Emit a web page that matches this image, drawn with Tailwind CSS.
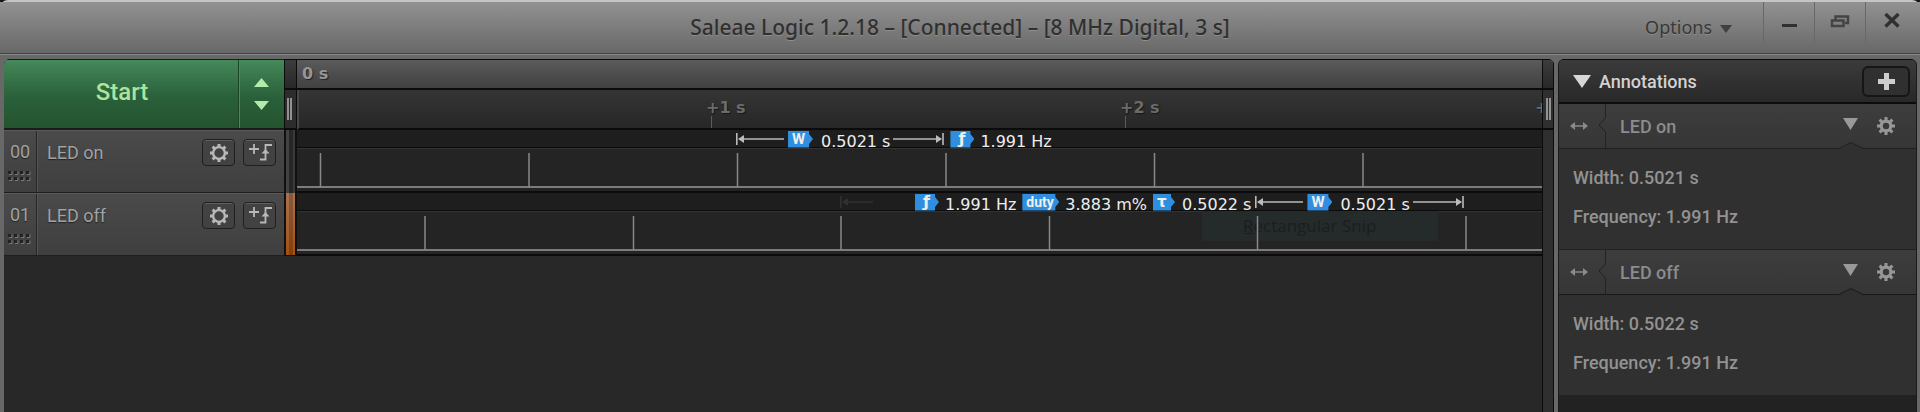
<!DOCTYPE html>
<html lang="en">
<head>
<meta charset="utf-8">
<title>Saleae Logic 1.2.18</title>
<script src="https://cdn.jsdelivr.net/npm/@tailwindcss/browser@4"></script>
</head>
<body class="bg-[#14161c]">
<svg class="hidden">
  <symbol id="gear" viewBox="0 0 20 20">
    <circle cx="10" cy="10" r="5.9" fill="none" stroke="currentColor" stroke-width="2.4"/>
    <g stroke="currentColor" stroke-width="3">
      <path d="M10 1v3M10 16v3M1 10h3M16 10h3M3.6 3.6l2.2 2.2M14.2 14.2l2.2 2.2M3.6 16.4l2.2-2.2M14.2 5.8l2.2-2.2"/>
    </g>
  </symbol>
  <symbol id="cog" viewBox="0 0 20 20">
    <circle cx="10" cy="10" r="4.8" fill="none" stroke="currentColor" stroke-width="3.2"/>
    <g stroke="currentColor" stroke-width="3">
      <path d="M10 1v4M10 15v4M1 10h4M15 10h4M3.6 3.6l3 3M13.4 13.4l3 3M3.6 16.4l3-3M13.4 6.6l3-3"/>
    </g>
  </symbol>
  <symbol id="edge" viewBox="0 0 24 20">
    <path d="M1 6h10M6 1v10M12 16.5h5.5V2H24" fill="none" stroke="currentColor" stroke-width="1.8"/>
    <path d="M13.500 10.500h8l-4-4.500z" fill="currentColor"/>
  </symbol>
  <symbol id="grip" viewBox="0 0 24 12">
    <g fill="#222"><path d="M0 1h3v3H0zM6 1h3v3H6zM12 1h3v3h-3zM18 1h3v3h-3zM0 7h3v3H0zM6 7h3v3H6zM12 7h3v3h-3zM18 7h3v3h-3z"/></g>
    <path d="M1 4.500h3v-3M7 4.500h3v-3M13 4.500h3v-3M19 4.500h3v-3M1 10.500h3v-3M7 10.500h3v-3M13 10.500h3v-3M19 10.500h3v-3" fill="none" stroke="#777"/>
  </symbol>
  <symbol id="span" viewBox="0 0 18 10">
    <path d="M2 5h14" stroke="currentColor" stroke-width="1.500"/>
    <path d="M0 5l5-4v8zM18 5l-5-4v8z" fill="currentColor"/>
  </symbol>
</svg>

<div class="flex min-h-screen flex-col rounded-t-lg border-t-2 border-[#c4c6c4] bg-[#686868] font-[Roboto,sans-serif]">
  <header class="flex h-[52px] items-start border-b border-[#444] bg-linear-to-b from-[#929292] to-[#686868]">
    <div class="flex-1"></div>
    <h1 class="pt-[11px] font-['Noto_Sans',sans-serif] text-[21px] leading-7 font-medium text-[#303030] [text-shadow:0_1px_0_#8d8d8d]">Saleae Logic 1.2.18 – [Connected] – [8 MHz Digital, 3 s]</h1>
    <div class="flex flex-1 justify-end">
      <button class="mr-[31px] flex items-center gap-2 pt-2.5 font-['Noto_Sans',sans-serif] text-[18px] leading-7 text-[#383838] [text-shadow:0_1px_0_#8d8d8d]">Options
        <svg class="mt-1 h-2 w-3" viewBox="0 0 12 8"><path d="M0 0h12L6 8z" fill="#404040"/></svg>
      </button>
      <button aria-label="Minimize" class="flex h-10 w-[51px] justify-center border-l border-[#686868] pt-[22px]"><span class="h-[3px] w-[15px] bg-[#303030]"></span></button>
      <button aria-label="Restore" class="flex h-10 w-[51px] justify-center border-l border-[#686868] pt-[13px]">
        <svg class="h-3.5 w-5" viewBox="0 0 20 14"><path d="M5.500 5V1.500h12.500v6.500h-3M2 5.500h11.500v5.500H2z" fill="none" stroke="#444" stroke-width="2.500"/></svg>
      </button>
      <button aria-label="Close" class="flex h-10 w-[55px] justify-center border-l border-[#686868] pt-2.5 pr-0.5">
        <svg class="h-4 w-4" viewBox="0 0 16 16"><path d="M1.500 2l13 12.500M14.500 2l-13 12.500" stroke="#303030" stroke-width="3.400"/></svg>
      </button>
    </div>
  </header>

  <main class="flex flex-1 items-stretch border-t border-[#888] pt-1 pr-[3px] pl-1">
    <section class="flex min-w-0 flex-1 flex-col overflow-hidden rounded-t-md bg-[#282828]">
      <div class="flex flex-1">
        <!-- Channels -->
        <div class="w-[280px] shrink-0">
          <div class="flex h-[71px] border-t border-b-2 border-[#1b1b1b] bg-linear-to-b from-[#45895a] via-[#29603a] via-55% to-[#24532f]">
            <button class="flex-1 border-r border-[#1b4527] pb-1 pl-0.5 text-[24px] font-medium text-[#aee39c]">Start</button>
            <button aria-label="Capture settings" class="flex w-[45px] flex-col items-center justify-center gap-3.5 border-l border-[#4c8a5e] pr-0.5">
              <svg class="h-[9px] w-[15px]" viewBox="0 0 15 9"><path d="M0 9h15L7.500 0z" fill="#b4ebac"/></svg>
              <svg class="h-[9px] w-[15px]" viewBox="0 0 15 9"><path d="M0 0h15L7.500 9z" fill="#b4ebac"/></svg>
            </button>
          </div>
          <div class="flex h-[63px] border-t border-b border-t-[#5a5a5a] border-b-[#1e1e1e] bg-linear-to-b from-[#4a4a4a] to-[#3f3f3f] text-[18px] text-[#a2a2a2] [text-shadow:0_1px_1px_#222]">
            <div class="flex w-[33px] flex-col items-center gap-1.5 border-r border-[#262626] pt-[9px]"><span class="leading-6">00</span><svg class="h-3 w-6"><use href="#grip"/></svg></div>
            <div class="flex flex-1 items-start gap-2 border-l border-[#555] pt-2 pr-2 pl-[9px]">
              <span class="flex-1 leading-7">LED on</span>
              <button aria-label="LED on settings" class="flex h-[27px] w-[33px] items-center justify-center rounded border border-[#1f1f1f] bg-[#424242] text-[#b8b8b8] inset-shadow-[0_1px_0_#606060]"><svg class="h-5 w-5"><use href="#gear"/></svg></button>
              <button aria-label="LED on trigger" class="flex h-[27px] w-[33px] items-center justify-center rounded border border-[#1f1f1f] bg-[#424242] text-[#b8b8b8] inset-shadow-[0_1px_0_#606060]"><svg class="h-5 w-6"><use href="#edge"/></svg></button>
            </div>
          </div>
          <div class="flex h-[63px] border-t border-b border-t-[#5a5a5a] border-b-[#1e1e1e] bg-linear-to-b from-[#4a4a4a] to-[#3f3f3f] text-[18px] text-[#a2a2a2] [text-shadow:0_1px_1px_#222]">
            <div class="flex w-[33px] flex-col items-center gap-1.5 border-r border-[#262626] pt-[9px]"><span class="leading-6">01</span><svg class="h-3 w-6"><use href="#grip"/></svg></div>
            <div class="flex flex-1 items-start gap-2 border-l border-[#555] pt-2 pr-2 pl-[9px]">
              <span class="flex-1 leading-7">LED off</span>
              <button aria-label="LED off settings" class="flex h-[27px] w-[33px] items-center justify-center rounded border border-[#1f1f1f] bg-[#424242] text-[#b8b8b8] inset-shadow-[0_1px_0_#606060]"><svg class="h-5 w-5"><use href="#gear"/></svg></button>
              <button aria-label="LED off trigger" class="flex h-[27px] w-[33px] items-center justify-center rounded border border-[#1f1f1f] bg-[#424242] text-[#b8b8b8] inset-shadow-[0_1px_0_#606060]"><svg class="h-5 w-6"><use href="#edge"/></svg></button>
            </div>
          </div>
        </div>

        <!-- Left splitter -->
        <div class="flex w-[13px] shrink-0 flex-col">
          <div class="h-[31px] border-x border-t border-b-2 border-[#0b0b0b] bg-linear-to-b from-[#3c3c3c] to-[#282828]"></div>
          <div class="flex h-10 justify-center gap-px border-x border-b-2 border-[#0b0b0b] bg-[#2c2c2c] pt-2 pr-0.5"><i class="h-[22px] w-0.5 bg-[#929292]"></i><i class="h-[22px] w-0.5 bg-[#929292]"></i></div>
          <div class="flex h-[63px] border-x-2 border-[#101010]"><i class="flex-1 bg-[#424242]"></i><i class="w-1 bg-[#272727]"></i><i class="flex-1 bg-[#3a3a3a]"></i></div>
          <div class="flex h-[63px] border-x-2 border-b border-[#101010] bg-linear-to-b from-[#a8714c] to-[#a5500c]"><i class="flex-1"></i><i class="w-1 bg-black/20"></i><i class="flex-1"></i></div>
        </div>

        <!-- Timeline -->
        <div class="min-w-0 flex-1 overflow-hidden font-['DejaVu_Sans',sans-serif] text-[16px]">
          <div class="h-[31px] border-t border-b-2 border-[#0b0b0b] bg-linear-to-b from-[#5b5b5b] from-0% via-[#4c4c4c] via-55% to-[#414141] pl-[5px] font-bold leading-7 text-[#969696] [text-shadow:1px_1px_1px_#222]">0 s</div>
          <div class="relative h-10 border-b-2 border-l-2 border-b-[#0b0b0b] border-l-[#484848] bg-linear-to-b from-[#353535] to-[#272727] font-bold text-[#6b6b6b] [text-shadow:1px_1px_1px_#181818]">
            <span class="absolute top-1.5 left-[407px] leading-6">+1 s</span><i class="absolute bottom-0 left-[412px] h-3 w-px bg-[#5c5c5c]"></i>
            <span class="absolute top-1.5 left-[821px] leading-6">+2 s</span><i class="absolute bottom-0 left-[826px] h-3 w-px bg-[#5c5c5c]"></i>
            <span class="absolute top-1.5 left-[1236px] leading-6 whitespace-nowrap">+3 s</span>
          </div>

          <div class="relative h-[63px] bg-[#242424] text-[#eee]">
            <div class="h-[18px] border-b border-[#0b0b0b] bg-[#1e1e1e]"></div>
            <div class="h-[40px] border-t border-b-2 border-t-[#333] border-b-[#7c7c7c]"></div>
            <div class="mt-[3px] h-0.5 bg-[#0b0b0b]"></div>
            <svg class="absolute top-[23px] left-0 h-[34px] w-full"><path d="M23.500 0v34M232 0v34M440.500 0v34M649 0v34M857.500 0v34M1066 0v34" stroke="#888" stroke-width="1.500"/></svg>
            <div class="absolute top-0 left-[439px] flex h-[18px] items-center whitespace-nowrap">
              <svg class="h-3 w-12" viewBox="0 0 48 12"><path d="M.8 0v12M3 6h45" stroke="#bbb" stroke-width="1.600"/><path d="M2 6l6-4v8z" fill="#bbb"/></svg>
              <b class="ml-1 flex h-[17px] w-[25px] items-center bg-[#2f8ee0] pl-1 font-[Roboto,sans-serif] text-[15px] leading-4 [clip-path:polygon(0_0,21px_0,21px_20%,25px_50%,21px_80%,21px_100%,0_100%)]">W</b>
              <span class="ml-2 pt-1.5 leading-4">0.5021 s</span>
              <svg class="ml-[3px] h-3 w-[51px]" viewBox="0 0 51 12"><path d="M50 0v12M0 6h48" stroke="#bbb" stroke-width="1.600"/><path d="M49 6l-6-4v8z" fill="#bbb"/></svg>
              <b class="ml-1.5 flex h-[17px] w-6 items-center bg-[#2f8ee0] pl-2 [clip-path:polygon(0_0,20px_0,20px_20%,24px_50%,20px_80%,20px_100%,0_100%)]">ƒ</b>
              <span class="ml-1.5 pt-1.5 leading-4">1.991 Hz</span>
            </div>
          </div>

          <div class="relative h-[63px] bg-[#242424] text-[#eee]">
            <div class="h-[18px] border-b border-[#0b0b0b] bg-[#1e1e1e]"></div>
            <div class="h-[40px] border-t border-b-2 border-t-[#333] border-b-[#7c7c7c]"></div>
            <div class="mt-[3px] h-0.5 bg-[#0b0b0b]"></div>
            <div class="absolute top-[18px] left-[905px] h-[30px] w-[236px] bg-[#252a2b] pl-[41px] font-['Open_Sans',sans-serif] text-[17px] leading-[29px] text-[#1b1e1f]"><u>R</u>ectangular Snip</div>
            <svg class="absolute top-[23px] left-0 h-[34px] w-full"><path d="M128 0v34M336.500 0v34M544 0v34M752.500 0v34M960.500 0v34M1169 0v34" stroke="#888" stroke-width="1.500"/></svg>
            <div class="absolute top-0 left-[543px] flex h-[18px] items-center whitespace-nowrap">
              <svg class="h-3 w-12" viewBox="0 0 48 12"><path d="M.8 0v12M3 6h30" stroke="#303030" stroke-width="1.600"/><path d="M2 6l6-4v8z" fill="#303030"/></svg>
              <b class="ml-[27px] flex h-[17px] w-6 items-center bg-[#2f8ee0] pl-2 [clip-path:polygon(0_0,20px_0,20px_20%,24px_50%,20px_80%,20px_100%,0_100%)]">ƒ</b>
              <span class="ml-1.5 pt-1.5 leading-4">1.991 Hz</span>
              <b class="ml-1.5 flex h-[17px] w-[37px] items-center bg-[#2f8ee0] pl-1 font-[Roboto,sans-serif] text-[14px] leading-4 [clip-path:polygon(0_0,33px_0,33px_20%,37px_50%,33px_80%,33px_100%,0_100%)]">duty</b>
              <span class="ml-1.5 pt-1.5 leading-4">3.883 m%</span>
              <b class="ml-1.5 flex h-[17px] w-[22px] items-center bg-[#2f8ee0] pl-1 text-[15px] [clip-path:polygon(0_0,18px_0,18px_20%,22px_50%,18px_80%,18px_100%,0_100%)]">τ</b>
              <span class="ml-[7px] pt-1.5 leading-4">0.5022 s</span>
              <svg class="ml-1 h-3 w-12" viewBox="0 0 48 12"><path d="M.8 0v12M3 6h45" stroke="#bbb" stroke-width="1.600"/><path d="M2 6l6-4v8z" fill="#bbb"/></svg>
              <b class="ml-1 flex h-[17px] w-[25px] items-center bg-[#2f8ee0] pl-1 font-[Roboto,sans-serif] text-[15px] leading-4 [clip-path:polygon(0_0,21px_0,21px_20%,25px_50%,21px_80%,21px_100%,0_100%)]">W</b>
              <span class="ml-2 pt-1.5 leading-4">0.5021 s</span>
              <svg class="ml-[3px] h-3 w-[51px]" viewBox="0 0 51 12"><path d="M50 0v12M0 6h48" stroke="#bbb" stroke-width="1.600"/><path d="M49 6l-6-4v8z" fill="#bbb"/></svg>
            </div>
          </div>
        </div>

        <!-- Right splitter -->
        <div class="flex w-3 shrink-0 flex-col border-x border-[#0b0b0b] bg-[#2f2f2f]">
          <div class="h-[31px] border-t border-b-2 border-[#0b0b0b] bg-linear-to-b from-[#3c3c3c] to-[#282828]"></div>
          <div class="flex h-10 justify-center gap-px border-b-2 border-[#0b0b0b] pt-2"><i class="h-[22px] w-0.5 bg-[#929292]"></i><i class="h-[22px] w-0.5 bg-[#929292]"></i></div>
        </div>
      </div>
    </section>

    <!-- Annotations -->
    <aside class="ml-1 w-[359px] shrink-0 overflow-hidden rounded-t-md border-x border-[#1a1a1a] bg-[#222] text-[18px] font-medium">
      <div class="flex h-[45px] items-center border-t border-b-2 border-[#0c0c0c] bg-linear-to-b from-[#3b3b3b] to-[#282828] pr-1.5 pl-3.5">
        <svg class="h-[13px] w-[18px]" viewBox="0 0 18 13"><path d="M0 0h18L9 13z" fill="#d6d6d6"/></svg>
        <h2 class="flex-1 pl-2 text-[#d2d2d2]">Annotations</h2>
        <button aria-label="Add annotation" class="flex h-[31px] w-12 items-center justify-center rounded-md border-2 border-[#161616] bg-[#303030]"><svg class="h-[17px] w-[17px]" viewBox="0 0 17 17"><path d="M8.500 0v17M0 8.500h17" stroke="#ccc" stroke-width="5"/></svg></button>
      </div>
      <div class="relative flex h-[45px] items-center border-b border-[#202020] bg-linear-to-b from-[#3d3d3d] to-[#363636] pr-5 pl-[11px] text-[#8c8c8c]">
        <svg class="h-2.5 w-[18px] text-[#8a8a8a]"><use href="#span"/></svg>
        <svg class="ml-2.5 h-11 w-2" viewBox="0 0 8 44"><path d="M7.500 0v14L1 21l6.500 7v16" fill="none" stroke="#222"/></svg>
        <span class="flex-1 pl-3.5">LED on</span>
        <button aria-label="Collapse LED on"><svg class="mb-1 h-3 w-[15px]" viewBox="0 0 15 12"><path d="M0 0h15L7.500 12z" fill="#999"/></svg></button>
        <button aria-label="LED on options" class="ml-[18px] text-[#979797]"><svg class="h-5 w-5"><use href="#cog"/></svg></button>
        <svg class="absolute right-[53px] -bottom-px h-[7px] w-6" viewBox="0 0 24 7"><path d="M0 6.500L12 .5l12 6V7H0z" fill="#303030"/><path d="M0 6.500L12 .5l12 6" fill="none" stroke="#202020"/></svg>
      </div>
      <div class="flex h-[101px] flex-col gap-[15px] border-b border-[#222] bg-[#303030] pt-[17px] pl-3.5 leading-6 text-[#929292]"><p>Width: 0.5021 s</p><p>Frequency: 1.991 Hz</p></div>
      <div class="relative flex h-[45px] items-center border-b border-[#181818] bg-linear-to-b from-[#3d3d3d] to-[#363636] pr-5 pl-[11px] text-[#8c8c8c]">
        <svg class="h-2.5 w-[18px] text-[#8a8a8a]"><use href="#span"/></svg>
        <svg class="ml-2.5 h-11 w-2" viewBox="0 0 8 44"><path d="M7.500 0v14L1 21l6.500 7v16" fill="none" stroke="#222"/></svg>
        <span class="flex-1 pl-3.5">LED off</span>
        <button aria-label="Collapse LED off"><svg class="mb-1 h-3 w-[15px]" viewBox="0 0 15 12"><path d="M0 0h15L7.500 12z" fill="#999"/></svg></button>
        <button aria-label="LED off options" class="ml-[18px] text-[#979797]"><svg class="h-5 w-5"><use href="#cog"/></svg></button>
        <svg class="absolute right-[53px] -bottom-px h-[7px] w-6" viewBox="0 0 24 7"><path d="M0 6.500L12 .5l12 6V7H0z" fill="#303030"/><path d="M0 6.500L12 .5l12 6" fill="none" stroke="#181818"/></svg>
      </div>
      <div class="flex h-[100px] flex-col gap-[15px] bg-[#303030] pt-[17px] pl-3.5 leading-6 text-[#929292]"><p>Width: 0.5022 s</p><p>Frequency: 1.991 Hz</p></div>
    </aside>
  </main>
</div>
</body>
</html>
